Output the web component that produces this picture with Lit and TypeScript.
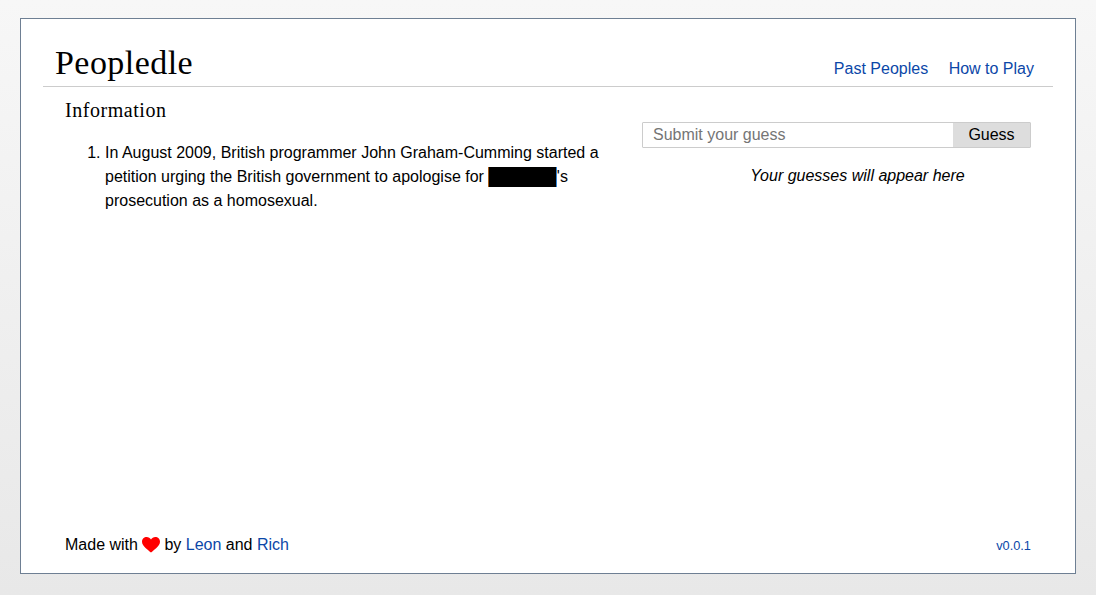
import { LitElement, html, css } from "lit";
import { customElement } from "lit/decorators.js";

@customElement("app-root")
export class AppRoot extends LitElement {
  static styles = css`
    :host { display: block; font-family: "Liberation Sans", Arial, sans-serif; font-size: 16px; color: #000; }
    .page { box-sizing: border-box; height: 595px; padding: 18px 20px 21px; background: linear-gradient(#f7f7f7, #e8e8e8); display: flex; }
    .card { box-sizing: border-box; flex: 1; background: #fff; border: 1px solid #6e7f93; padding: 0 22px; display: flex; flex-direction: column; }
    header { height: 68px; box-sizing: border-box; border-bottom: 1px solid #ccc; display: flex; justify-content: space-between; align-items: flex-end; padding: 0 19px 7px 12px; }
    h1 { margin: 0; font: 400 34px/39px "Liberation Serif", serif; letter-spacing: 0.45px; position: relative; top: 3px; }
    nav { display: flex; gap: 20.5px; line-height: 20px; }
    a { color: #0b47a8; text-decoration: none; }
    main { flex: 1; display: flex; justify-content: space-between; padding: 0 22px 0 22px; }
    .info { width: 545px; }
    h2 { margin: 0; font: 400 20px/22px "Liberation Serif", serif; letter-spacing: 0.55px; padding-top: 12px; }
    ol { margin: 20px 0 0; padding: 0 0 0 40px; line-height: 24px; }
    .redact { display: inline-block; box-sizing: border-box; width: 68.5px; height: 20px; font-size: 14.5px; line-height: 20px; overflow: hidden; vertical-align: -5px; white-space: nowrap; background: #000; color: #000; border-left: 1px solid #a85a10; border-right: 1px solid #2f86d8; }
    .side { width: 389px; padding-top: 35px; }
    form { display: flex; height: 26px; box-sizing: border-box; border: 1px solid #ccc; border-radius: 1px; margin: 0; }
    input { flex: 1; min-width: 0; border: 0; padding: 0 10px; font: inherit; outline: 0; background: #fff; }
    input::placeholder { color: #757575; opacity: 1; }
    button { width: 77px; border: 0; padding: 0; background: #ddd; font: inherit; color: #000; }
    .hint { margin: 18px 0 0; text-align: center; font-style: italic; line-height: 20px; padding-left: 42px; }
    footer { display: flex; justify-content: space-between; align-items: center; height: 20px; padding: 0 22px 0 22px; margin-bottom: 18px; }
    .made { display: flex; align-items: center; white-space: pre; }
    .heart { width: 18px; height: 16px; margin: 0 4.5px 0 4px; display: block; }
    .version { font-size: 12.8px; }
  `;

  render() {
    return html`<div class="page"><div class="card">
      <header>
        <h1>Peopledle</h1>
        <nav><a href="#">Past Peoples</a><a href="#">How to Play</a></nav>
      </header>
      <main>
        <section class="info">
          <h2>Information</h2>
          <ol><li>In August 2009, British programmer John Graham-Cumming started a petition urging the British government to apologise for <span class="redact">██████</span>'s prosecution as a homosexual.</li></ol>
        </section>
        <section class="side">
          <form @submit=${(e: Event) => e.preventDefault()}>
            <input placeholder="Submit your guess" /><button>Guess</button>
          </form>
          <p class="hint">Your guesses will appear here</p>
        </section>
      </main>
      <footer>
        <div class="made">Made with<svg class="heart" viewBox="0 0 18 16"><path fill="#f00" d="M9 15.6C6.6 13.5 0 9.2 0 4.8 0 2 2.1 0 4.7 0 6.5 0 8.1 1 9 2.5 9.9 1 11.5 0 13.3 0 15.9 0 18 2 18 4.8c0 4.4-6.6 8.7-9 10.8z"/></svg>by <a href="#">Leon</a> and <a href="#">Rich</a></div>
        <a class="version" href="#">v0.0.1</a>
      </footer>
    </div></div>`;
  }
}
